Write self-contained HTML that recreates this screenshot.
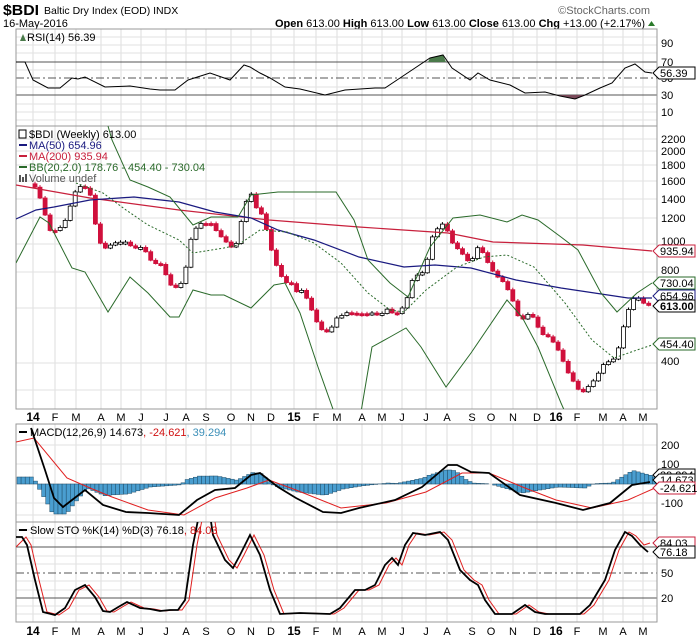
<!DOCTYPE html>
<html><head><meta charset="utf-8">
<style>
body{margin:0;background:#fff;width:700px;height:639px;overflow:hidden;font-family:"Liberation Sans",sans-serif}
svg{display:block}
text{font-family:"Liberation Sans",sans-serif;font-size:11px;fill:#000}
</style></head><body>
<svg id="s" width="700" height="639" xmlns="http://www.w3.org/2000/svg">
<defs>
<clipPath id="cR"><rect x="16" y="29" width="641" height="97"/></clipPath>
<clipPath id="cM"><rect x="16" y="126" width="641" height="283"/></clipPath>
<clipPath id="cD"><rect x="16" y="424" width="641" height="98"/></clipPath>
<clipPath id="cS"><rect x="16" y="522" width="641" height="100"/></clipPath>
</defs>
<text x="3" y="15" style="font-size:15px;font-weight:bold" textLength="36" lengthAdjust="spacingAndGlyphs">$BDI</text>
<text x="44" y="14" style="font-size:10.5px">Baltic Dry Index (EOD)  INDX</text>
<text x="650" y="14" text-anchor="end" style="fill:#666;font-size:11px">©StockCharts.com</text>
<text x="3" y="27" style="font-size:11px">16-May-2016</text>
<text x="645" y="27" text-anchor="end" style="font-size:11px"><tspan font-weight="bold">Open</tspan> 613.00 <tspan font-weight="bold">High</tspan> 613.00 <tspan font-weight="bold">Low</tspan> 613.00 <tspan font-weight="bold">Close</tspan> 613.00 <tspan font-weight="bold">Chg</tspan> +13.00 (+2.17%)</text>
<path d="M648 26 L651.5 21 L655 26Z" fill="#2a7a2a"/>
<g id="g"></g>
</svg>
<script>
var g=document.getElementById('g'),h='';
function P(pts){return pts.map(function(p){return p[0]+','+p[1]}).join(' ')}
function line(pts,c,w,extra,clip){h+='<polyline points="'+P(pts)+'" fill="none" stroke="'+c+'" stroke-width="'+w+'" '+(extra||'')+(clip?' clip-path="url(#'+clip+')"':'')+'/>'}
function T(x,y,t,st){h+='<text x="'+x+'" y="'+y+'" '+(st||'')+'>'+t+'</text>'}
var mx=[33,55,76,101,121,141,166,186,206,231,251,271,294,316,337,362,382,402,426,447,472,491,513,537,556,577,603,623,643];
var ml=['14','F','M','A','M','J','J','A','S','O','N','D','15','F','M','A','M','J','J','A','S','O','N','D','16','F','M','A','M'];
var panels=[[29,126],[126,409],[424,522],[522,622]];
panels.forEach(function(p){
 mx.forEach(function(x){h+='<line x1="'+x+'" y1="'+p[0]+'" x2="'+x+'" y2="'+p[1]+'" stroke="#dcdcdc"/>'});
});
function hl(y,x1,c,dash){h+='<line x1="16" y1="'+y+'" x2="657" y2="'+y+'" stroke="'+(c||'#e2e2e2')+'" '+(dash?'stroke-dasharray="'+dash+'"':'')+'/>'}
[37,45,53,70,87,104,112,120].forEach(function(y){hl(y)});
hl(62,0,'#555');hl(78,0,'#555','8,3,2,3');hl(95,0,'#555');
[139,151,165,181,199,218,244,272,308,363,390].forEach(function(y){hl(y)});
[445,464,484,503,515].forEach(function(y){hl(y)});
[530,538,556,564,581,590,606,614].forEach(function(y){hl(y)});
hl(547,0,'#555');hl(573,0,'#555','8,3,2,3');hl(598,0,'#555');
panels.forEach(function(p){h+='<rect x="16" y="'+p[0]+'" width="641" height="'+(p[1]-p[0])+'" fill="none" stroke="#999"/>'});
[417,631].forEach(function(y){mx.forEach(function(x,i){var b=/\d/.test(ml[i]);T(x,y+4,ml[i],'text-anchor="middle" style="font-size:'+(b?'12px;font-weight:bold':'11px')+'"')})});
[['90',47],['70',66],['50',82],['30',99],['10',116]].forEach(function(a){T(661,a[1],a[0])});
[['2200',143],['2000',155],['1800',169],['1600',185],['1400',203],['1200',222],['1000',245],['800',274],['400',365]].forEach(function(a){T(661,a[1],a[0])});
[['200',449],['100',468],['-100',507]].forEach(function(a){T(661,a[1],a[0])});
[['50',577],['20',602]].forEach(function(a){T(661,a[1],a[0])});
var rsi=[[16,62],[25,62],[33,80],[48,88],[60,88],[72,78],[78,79],[85,77],[105,87],[130,86],[150,89],[160,90],[175,90],[188,80],[210,73],[230,80],[244,65],[250,67],[260,73],[270,78],[285,87],[300,89],[325,95],[345,90],[375,88],[385,88],[400,78],[415,68],[430,58],[443,55],[452,68],[470,80],[478,73],[490,80],[510,85],[525,93],[545,92],[560,96],[575,99],[585,95],[600,88],[612,83],[625,68],[635,64],[645,72],[652,73]];
h+='<path d="M428,62 L430,58 L443,55 L446,62Z" fill="#4a7a4a"/><path d="M558,95 L560,96 L575,99 L585,95Z" fill="#7a4a5a"/>';
line(rsi,'#000',1,'',"cR");
T(27,41,'RSI(14) 56.39');h+='<path d="M20,41 L23,34 L26,41Z" fill="#4a7a4a"/>';
var pk=[[35,1520],[40,1400],[45,1230],[49,1090],[58,1090],[67,1200],[74,1450],[82,1550],[90,1450],[94,1200],[99,1000],[105,950],[114,990],[125,1000],[134,950],[143,960],[150,870],[157,840],[161,840],[170,720],[175,700],[184,740],[190,1000],[195,1100],[200,1150],[211,1150],[215,1100],[222,1030],[231,960],[235,950],[240,1100],[244,1320],[251,1450],[256,1300],[260,1270],[265,1150],[269,1000],[274,870],[280,780],[285,730],[291,730],[296,680],[303,690],[309,620],[316,545],[321,510],[327,500],[332,520],[336,555],[343,570],[347,580],[356,575],[361,575],[368,575],[374,580],[381,570],[386,600],[391,580],[397,575],[406,620],[410,720],[415,770],[421,780],[426,810],[430,1000],[435,1080],[442,1150],[448,1080],[453,980],[460,930],[466,880],[471,830],[475,950],[480,960],[484,900],[491,810],[498,760],[504,730],[511,660],[516,590],[520,540],[527,570],[531,580],[536,530],[543,490],[549,480],[556,450],[563,400],[567,370],[572,350],[576,325],[583,315],[587,325],[592,340],[596,350],[601,380],[605,395],[612,400],[617,420],[621,480],[626,560],[632,640],[637,660],[641,630],[648,613]];
function Y(p){return 361-130.2*Math.log(p/400)}
function interp(a,x){if(x<=a[0][0])return a[0][1];for(var i=1;i<a.length;i++){if(x<=a[i][0]){var t=(x-a[i-1][0])/(a[i][0]-a[i-1][0]);return a[i-1][1]+(a[i][1]-a[i-1][1])*t}}return a[a.length-1][1]}
var prevY=Y(1560);
for(var x=35;x<=649;x+=5.03){var cy=Y(interp(pk,x)),oy=prevY,up=cy<oy,t=Math.min(cy,oy),b=Math.max(cy,oy);if(b-t<2){b=t+2}
 h+='<line x1="'+x.toFixed(1)+'" y1="'+(t-2)+'" x2="'+x.toFixed(1)+'" y2="'+(b+1)+'" stroke="'+(up?'#000':'#c8103c')+'" clip-path="url(#cM)"/>';
 h+='<rect x="'+(x-2).toFixed(1)+'" y="'+t.toFixed(1)+'" width="4" height="'+(b-t).toFixed(1)+'" fill="'+(up?'#fff':'#d0103c')+'" stroke="'+(up?'#000':'#d0103c')+'" stroke-width="0.8" clip-path="url(#cM)"/>';
 prevY=cy;}
line([[16,185],[90,198],[179,210],[269,220],[359,227],[448,233],[493,242],[583,245],[652,251]],'#c8203c',1.2,'','cM');
line([[16,219],[36,210],[54,207],[90,200],[134,197],[179,202],[215,212],[251,218],[278,230],[314,240],[359,257],[404,267],[435,265],[471,268],[516,280],[561,288],[628,298],[652,298]],'#1a1a80',1.2,'','cM');
line([[76,183],[103,193],[126,210],[148,225],[179,240],[193,253],[224,248],[238,245],[260,230],[287,232],[314,243],[341,263],[368,293],[390,310],[404,312],[426,290],[457,267],[484,257],[507,255],[534,267],[565,303],[592,340],[614,358],[637,350],[652,345]],'#2a6a2a',1,'stroke-dasharray="2,2"','cM');
line([[108,126],[112,140],[130,180],[148,187],[170,197],[193,225],[211,217],[238,217],[251,195],[278,192],[314,192],[336,192],[354,220],[368,260],[390,283],[408,297],[430,247],[453,218],[480,215],[507,222],[522,215],[538,220],[561,237],[578,250],[601,293],[617,312],[637,293],[652,283]],'#2a6a2a',1,'','cM');
line([[16,263],[40,217],[49,223],[72,268],[85,272],[108,312],[130,277],[148,293],[170,317],[179,317],[193,290],[211,295],[224,295],[251,308],[274,285],[285,283],[300,313],[318,367],[334,412]],'#2a6a2a',1,'','cM');
line([[361,412],[372,347],[390,337],[406,328],[421,347],[446,387],[471,353],[507,300],[522,317],[538,347],[561,403],[565,412]],'#2a6a2a',1,'','cM');
var lg=[['$BDI (Weekly) 613.00','#000',138],['MA(50) 654.96','#1a1a80',149],['MA(200) 935.94','#c8203c',160],['BB(20,2.0) 178.76 - 454.40 - 730.04','#2a6a2a',171],['Volume undef','#555',182]];
lg.forEach(function(a,i){T(29,a[2],a[0],'style="fill:'+a[1]+'"');if(i>0&&i<4)h+='<line x1="19" y1="'+(a[2]-4)+'" x2="27" y2="'+(a[2]-4)+'" stroke="'+a[1]+'" stroke-width="2"/>'});
h+='<rect x="19" y="130" width="7" height="8" fill="none" stroke="#000"/><rect x="19" y="175" width="2" height="7" fill="#555"/><rect x="22" y="177" width="2" height="5" fill="#555"/><rect x="25" y="174" width="2" height="8" fill="#555"/>';
var mac=[[31,428],[45,470],[54,498],[63,507],[72,500],[85,490],[103,505],[126,512],[148,513],[179,515],[197,500],[215,490],[235,488],[251,475],[260,473],[278,487],[296,498],[323,512],[341,513],[359,508],[395,500],[422,487],[448,465],[457,465],[471,472],[489,473],[520,495],[556,503],[583,510],[610,503],[632,485],[650,482]];
var sig=[[16,442],[34,438],[67,478],[90,488],[112,497],[148,510],[184,515],[215,498],[247,488],[269,480],[296,490],[341,508],[386,503],[426,492],[462,473],[489,473],[525,488],[556,500],[592,508],[628,500],[655,488]];
for(var x=17;x<655;x+=4.1){var d=(interp(sig,x)-interp(mac,x));if(x<32)d=7;d=Math.max(-30,Math.min(14,d));var t=484-d;var a=Math.min(t,484),b=Math.max(t,484);
 h+='<rect x="'+x.toFixed(1)+'" y="'+a.toFixed(1)+'" width="4.1" height="'+(b-a+0.01).toFixed(1)+'" fill="#4a9ed0" stroke="#1d4a66" stroke-width="0.5" clip-path="url(#cD)"/>';}
line(sig,'#e02020',1,'','cD');
line(mac,'#000',1.8,'','cD');
T(30,436,'MACD(12,26,9) 14.673<tspan fill="#d01010">, -24.621</tspan><tspan fill="#3b8fb8">, 39.294</tspan>');
h+='<line x1="19" y1="432" x2="27" y2="432" stroke="#000" stroke-width="2"/>';
var k=[[16,537],[22,537],[27,545],[35,580],[43,612],[55,615],[65,608],[75,590],[85,585],[95,597],[103,611],[110,612],[120,606],[127,602],[140,608],[150,609],[160,611],[170,610],[178,610],[185,600],[193,545],[199,515],[210,515],[213,535],[225,560],[233,568],[240,555],[250,535],[260,555],[270,590],[280,614],[300,613],[330,614],[340,608],[355,590],[365,590],[375,585],[385,565],[392,558],[398,565],[405,545],[413,533],[425,535],[440,532],[448,540],[460,570],[470,580],[478,585],[485,600],[495,614],[512,614],[525,605],[535,612],[545,614],[580,614],[590,605],[605,580],[615,550],[625,532],[632,536],[640,545],[648,552]];
var dd=k.map(function(p){return [p[0]+4,p[1]]});dd[0]=[16,547];dd[dd.length-1]=[650,543];
line(dd,'#e02020',1,'','cS');line(k,'#000',1.8,'','cS');
T(30,534,'Slow STO %K(14) %D(3) 76.18<tspan fill="#d01010">, 84.03</tspan>');
h+='<line x1="19" y1="530" x2="27" y2="530" stroke="#000" stroke-width="2"/>';
function tag(y,t,c,bold){var w=36;h+='<path d="M653,'+y+' L659,'+(y-6)+' L'+(659+w)+','+(y-6)+' L'+(659+w)+','+(y+6)+' L659,'+(y+6)+'Z" fill="#fff" stroke="'+c+'"/>';T(660,y+4,t,'style="'+(bold?'font-weight:bold;':'')+'font-size:11px"')}
tag(73,'56.39','#000');
tag(251,'935.94','#c8203c');tag(283,'730.04','#2a6a2a');tag(296,'654.96','#1a1a80');tag(306,'613.00','#000',1);tag(344,'454.40','#2a6a2a');
tag(475,'39.294','#000');tag(480,'14.673','#000');tag(488,'-24.621','#c8203c');
tag(543,'84.03','#c8203c');tag(552,'76.18','#000');
g.innerHTML=h;
</script>
</body></html>
